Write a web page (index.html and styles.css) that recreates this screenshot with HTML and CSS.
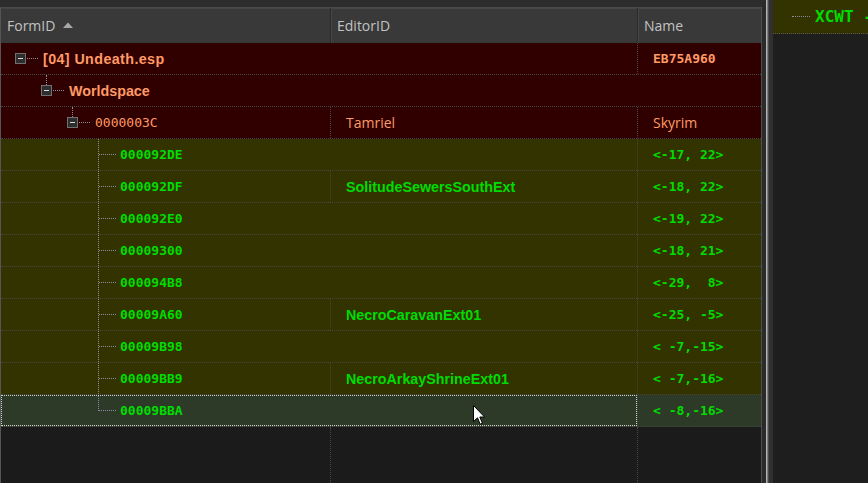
FILE: index.html
```html
<!DOCTYPE html>
<html>
<head>
<meta charset="utf-8">
<link rel="stylesheet" href="styles.css">
</head>
<body>
<div class="app">
  <div class="tree">
    <div class="header">
      <div class="hcell">FormID <svg class="sort" width="10" height="6" viewBox="0 0 10 6"><path d="M0 6 L5 0.5 L10 6 Z" fill="#a8a8a8"/></svg></div>
      <div class="hcell sep">EditorID</div>
      <div class="hcell sep">Name</div>
    </div>

    <div class="row red">
      <div class="c1 l0"><span class="box"></span><span class="conn"></span><span class="lbl sans orange">[04] Undeath.esp</span></div>
      <div class="c2"></div>
      <div class="c3 bd mono b orange">EB75A960</div>
    </div>
    <div class="row red">
      <div class="c1 l1"><span class="box"></span><span class="conn"></span><span class="lbl sans orange">Worldspace</span></div>
      <div class="c2"></div>
      <div class="c3"></div>
    </div>
    <div class="row red">
      <div class="c1 l2"><span class="box"></span><span class="conn"></span><span class="lbl mono orange">0000003C</span></div>
      <div class="c2 bd ui orange">Tamriel</div>
      <div class="c3 bd ui orange">Skyrim</div>
    </div>

    <div class="row olive">
      <div class="c1 l3"><span class="conn"></span><span class="lbl mono b green">000092DE</span></div>
      <div class="c2"></div>
      <div class="c3 bd mono b green">&lt;-17, 22&gt;</div>
    </div>
    <div class="row olive">
      <div class="c1 l3"><span class="conn"></span><span class="lbl mono b green">000092DF</span></div>
      <div class="c2 bd sans green">SolitudeSewersSouthExt</div>
      <div class="c3 bd mono b green">&lt;-18, 22&gt;</div>
    </div>
    <div class="row olive">
      <div class="c1 l3"><span class="conn"></span><span class="lbl mono b green">000092E0</span></div>
      <div class="c2"></div>
      <div class="c3 bd mono b green">&lt;-19, 22&gt;</div>
    </div>
    <div class="row olive">
      <div class="c1 l3"><span class="conn"></span><span class="lbl mono b green">00009300</span></div>
      <div class="c2"></div>
      <div class="c3 bd mono b green">&lt;-18, 21&gt;</div>
    </div>
    <div class="row olive">
      <div class="c1 l3"><span class="conn"></span><span class="lbl mono b green">000094B8</span></div>
      <div class="c2"></div>
      <div class="c3 bd mono b green">&lt;-29,  8&gt;</div>
    </div>
    <div class="row olive">
      <div class="c1 l3"><span class="conn"></span><span class="lbl mono b green">00009A60</span></div>
      <div class="c2 bd sans green">NecroCaravanExt01</div>
      <div class="c3 bd mono b green">&lt;-25, -5&gt;</div>
    </div>
    <div class="row olive">
      <div class="c1 l3"><span class="conn"></span><span class="lbl mono b green">00009B98</span></div>
      <div class="c2"></div>
      <div class="c3 bd mono b green">&lt; -7,-15&gt;</div>
    </div>
    <div class="row olive">
      <div class="c1 l3"><span class="conn"></span><span class="lbl mono b green">00009BB9</span></div>
      <div class="c2 bd sans green">NecroArkayShrineExt01</div>
      <div class="c3 bd mono b green">&lt; -7,-16&gt;</div>
    </div>
    <div class="row sel">
      <div class="c1 l3 last"><span class="conn"></span><span class="lbl mono b green">00009BBA</span></div>
      <div class="c2"></div>
      <div class="c3 bd mono b green">&lt; -8,-16&gt;</div>
    </div>

    <div class="filler">
      <div class="c1"></div>
      <div class="c2 bd"></div>
      <div class="c3 bd"></div>
    </div>
  </div>
  <div class="splitter"></div>
  <div class="side">
    <div class="side-row"><span class="conn wide"></span><span class="xcwt">XCWT -</span></div>
  </div>
</div>
<svg class="cursor" width="13" height="21" viewBox="0 0 13 21"><path d="M0.5 0.5 L0.5 16.5 L4.5 12.8 L7.2 19.2 L9.4 18.2 L6.8 12 L11.6 12 Z" fill="#fff" stroke="#000" stroke-width="1" stroke-linejoin="miter"/></svg>
</body>
</html>
```

FILE: styles.css
```css
html, body {
  margin: 0;
  padding: 0;
}
body {
  width: 868px;
  height: 483px;
  overflow: hidden;
  background: #2d2d2d;
  font-family: "Liberation Sans", sans-serif;
  position: relative;
}
.app {
  display: flex;
  height: 483px;
}
.tree {
  width: 760px;
  margin-top: 7px;
  border-top: 1px solid #4a4a4a;
  border-left: 1px solid #555;
  border-right: 1px solid #4e4e4e;
  display: flex;
  flex-direction: column;
  background: #1b1b1b;
}
.header {
  display: grid;
  grid-template-columns: 329px 307px 124px;
  height: 35px;
  flex: none;
  background: #393939;
}
.hcell {
  display: flex;
  align-items: center;
  padding-left: 6px;
  font-family: "Open Sans", sans-serif;
  font-size: 14px;
  color: #c2c2c2;
  box-shadow: inset 0 1px 0 #454545;
}
.hcell.sep {
  border-left: 1px solid #2a2a2a;
  box-shadow: inset 1px 1px 0 #474747;
}
.sort {
  margin-left: 8px;
  margin-top: -2px;
}
.row {
  display: grid;
  grid-template-columns: 329px 307px 124px;
  height: 32px;
  box-sizing: border-box;
  border-bottom: 1px dotted #464646;
  position: relative;
  flex: none;
}
.row.red { background: #300000; }
.row.olive { background: #333300; }
.row.sel { background: #2d3a27; }
.row.sel::after {
  content: "";
  position: absolute;
  left: 0;
  top: 0;
  width: 636px;
  height: 31px;
  box-sizing: border-box;
  border: 1px dotted #d0d0d0;
  pointer-events: none;
}
.c1, .c2, .c3 {
  display: flex;
  align-items: center;
  white-space: nowrap;
  overflow: hidden;
}
.c2, .c3 {
  border-left: 1px dotted transparent;
  padding-left: 15px;
}
.bd {
  border-left-color: #464646;
}
.c1 {
  position: relative;
}
.l0 { padding-left: 14px; }
.l1 { padding-left: 40px; }
.l2 { padding-left: 66px; }
.l3 { padding-left: 97px; }
.l1::before, .l2::before, .l3::before {
  content: "";
  position: absolute;
  top: 0;
  border-left: 1px dotted #8a8aa2;
}
.l1::before { left: 45px; height: 10px; }
.l2::before { left: 71px; height: 10px; }
.l3::before { left: 97px; height: 33px; }
.l3.last::before { height: 16px; }
.box {
  width: 11px;
  height: 11px;
  box-sizing: border-box;
  border: 1px solid #707070;
  background: #2e2e2e;
  position: relative;
  flex: none;
}
.box::after {
  content: "";
  position: absolute;
  left: 2px;
  top: 4px;
  width: 5px;
  height: 1px;
  background: #dcdcdc;
}
.conn {
  width: 11px;
  height: 0;
  margin-left: 1px;
  border-top: 1px dotted #8a8aa2;
  flex: none;
}
.l3 .conn { width: 17px; margin-left: 1px; }
.lbl { margin-left: 5px; }
.l3 .lbl { margin-left: 4px; }
.mono {
  font-family: "DejaVu Sans Mono", monospace;
  font-size: 13px;
  white-space: pre;
}
.b { font-weight: bold; }
.sans {
  font-family: "Liberation Sans", sans-serif;
  font-weight: bold;
  font-size: 14.3px;
}
.l0 .sans { letter-spacing: 0.4px; }
.ui {
  font-family: "Open Sans", sans-serif;
  font-size: 14px;
}
.orange { color: #ff9a66; }
.green { color: #00dc00; }
.filler {
  flex: 1;
  display: grid;
  grid-template-columns: 329px 307px 124px;
}
.splitter {
  width: 11px;
  flex: none;
  background: linear-gradient(to right, #2b2b2b 0 4px, #b4b4b4 4px 5px, #7c7c7c 5px 6px, #4a4a4a 6px 7px, #303030 7px 11px);
}
.side {
  flex: 1;
  background: #1e1e1e;
  overflow: hidden;
}
.side-row {
  height: 33px;
  border-bottom: 1px dotted #555;
  background: #333300;
  display: flex;
  align-items: center;
  padding-left: 19px;
}
.conn.wide { width: 18px; margin-left: 0; }
.xcwt {
  margin-left: 5px;
  font-family: "DejaVu Sans Mono", monospace;
  font-weight: bold;
  font-size: 16px;
  color: #00dc00;
  white-space: pre;
}
.cursor {
  position: absolute;
  left: 473px;
  top: 405px;
}
```
